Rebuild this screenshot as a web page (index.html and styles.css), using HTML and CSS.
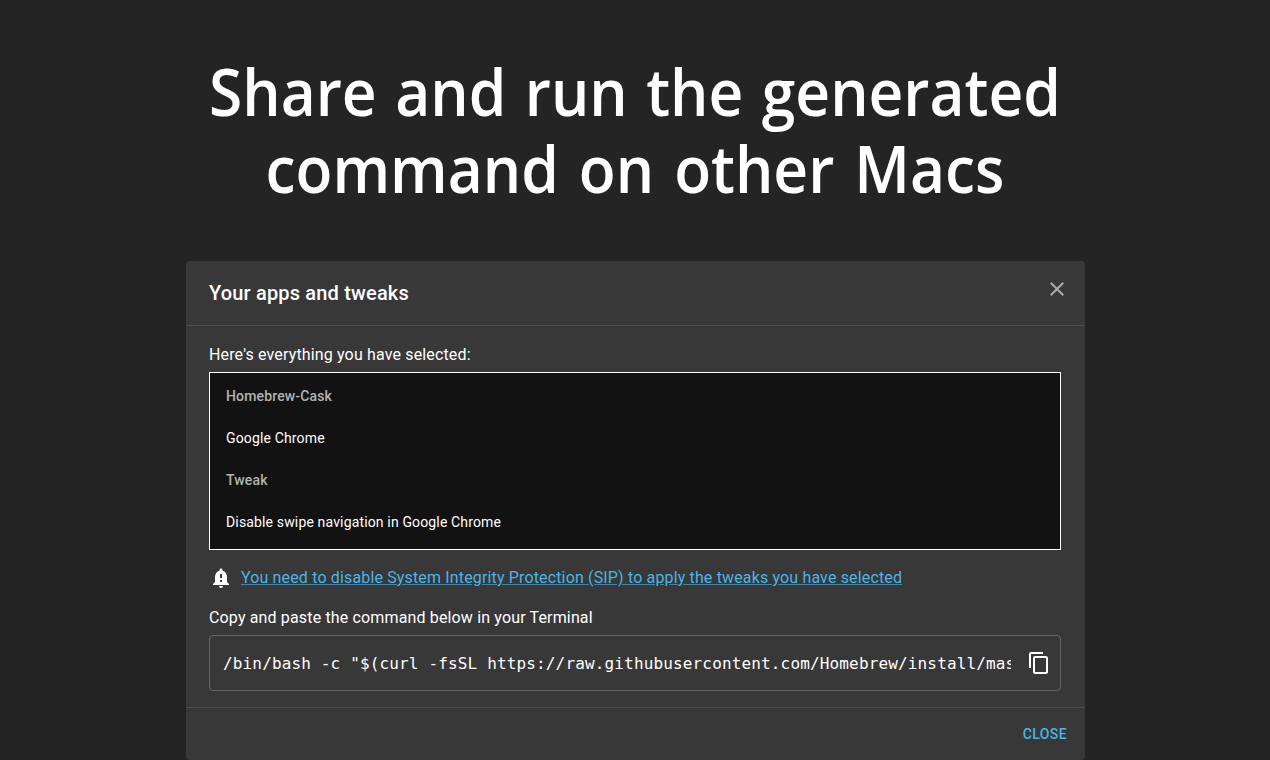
FILE: index.html
```html
<!DOCTYPE html>
<html lang="en">
<head>
    <meta charset="UTF-8">
    <title>Share and run the generated command</title>
    <link rel="stylesheet" href="styles.css">
</head>
<body>
<h1 class="headline">
    <span class="line first">Share and run the generated</span>
    <span class="line second">command on other Macs</span>
</h1>
<div class="dialog">
    <div class="dialog-title">
        <h2>Your apps and tweaks</h2>
        <button class="icon-btn dismiss" aria-label="close">
            <svg width="24" height="24" viewBox="0 0 24 24"><path d="M19 6.41L17.59 5 12 10.59 6.41 5 5 6.41 10.59 12 5 17.59 6.41 19 12 13.41 17.59 19 19 17.59 13.41 12z"/></svg>
        </button>
    </div>
    <div class="dialog-content">
        <p>Here's everything you have selected:</p>
        <ul class="selected">
            <li class="group">Homebrew-Cask</li>
            <li>Google Chrome</li>
            <li class="group">Tweak</li>
            <li>Disable swipe navigation in Google Chrome</li>
        </ul>
        <div class="notice">
            <svg width="24" height="24" viewBox="0 0 24 24"><path d="M18 16v-5c0-3.07-1.64-5.64-4.5-6.32V4c0-.83-.67-1.5-1.5-1.5s-1.5.67-1.5 1.5v.68C7.63 5.36 6 7.92 6 11v5l-2 2v1h16v-1l-2-2zm-5 0h-2v-2h2v2zm0-4h-2V8h2v4zm-1 10c1.1 0 2-.9 2-2h-4c0 1.1.89 2 2 2z"/></svg>
            <a href="#">You need to disable System Integrity Protection (SIP) to apply the tweaks you have selected</a>
        </div>
        <p>Copy and paste the command below in your Terminal</p>
        <div class="command">
            <code>/bin/bash -c "$(curl -fsSL https://raw.githubusercontent.com/Homebrew/install/mas</code>
            <button class="icon-btn" aria-label="copy">
                <svg width="24" height="24" viewBox="0 0 24 24"><path d="M16 1H4c-1.1 0-2 .9-2 2v14h2V3h12V1zm3 4H8c-1.1 0-2 .9-2 2v14c0 1.1.9 2 2 2h11c1.1 0 2-.9 2-2V7c0-1.1-.9-2-2-2zm0 16H8V7h11v14z"/></svg>
            </button>
        </div>
    </div>
    <div class="dialog-actions">
        <button class="close">CLOSE</button>
    </div>
</div>
</body>
</html>
```
FILE: styles.css
```css
* {
    padding: 0;
    margin: 0;
    list-style: none;
    box-sizing: border-box;
}

body {
    height: 760px;
    overflow: hidden;
    background: #242424;
    color: #fff;
    font-family: Roboto, "Liberation Sans", sans-serif;
    font-size: 16px;
    line-height: 24px;
    letter-spacing: 0.15px;
}

button {
    border: 0;
    background: none;
    color: inherit;
    font-family: inherit;
    cursor: pointer;
}

svg {
    display: block;
    fill: currentColor;
}

.headline {
    height: 261px;
    padding-top: 53px;
    font-family: "Open Sans", "Noto Sans", sans-serif;
    font-size: 65px;
    font-weight: 600;
    line-height: 77px;
    letter-spacing: 0;
    text-align: center;
    white-space: nowrap;
}

.line {
    display: block;
    transform: scaleX(0.93);
}

.first {
    word-spacing: 3px;
}

.second {
    word-spacing: 4.6px;
}

.dialog {
    width: 899px;
    height: 499px;
    margin-left: 186px;
    background: #383838;
    border-radius: 4px;
}

.dialog-title {
    display: flex;
    justify-content: space-between;
    height: 65px;
    padding: 16px 16px 0 23px;
    border-bottom: 1px solid #4d4d4d;
}

.dialog-title h2 {
    font-size: 20px;
    font-weight: 500;
    line-height: 32px;
    letter-spacing: 0.17px;
}

.dismiss {
    height: 24px;
    color: #aaa;
}

.dialog-content {
    height: 382px;
    padding: 17px 24px 0 23px;
    border-bottom: 1px solid #4d4d4d;
}

.selected {
    height: 178px;
    margin: 5px 0 16px;
    padding: 2px 16px;
    background: #121212;
    border: 1px solid #fff;
    font-size: 14px;
}

.selected li {
    line-height: 42px;
}

.selected .group {
    color: #b3b3b3;
    font-weight: 500;
}

.notice {
    display: flex;
    gap: 8px;
    margin-bottom: 16px;
}

.notice a {
    color: #4ab4e6;
    text-decoration-color: #4186a6;
}

.command {
    display: flex;
    align-items: center;
    justify-content: space-between;
    height: 56px;
    margin-top: 5px;
    padding: 0 9px 0 13px;
    border: 1px solid #666;
    border-radius: 4px;
}

.command code {
    width: 788px;
    padding-top: 2px;
    overflow: hidden;
    font-family: "DejaVu Sans Mono", monospace;
    font-size: 16px;
    white-space: nowrap;
}

.dialog-actions {
    display: flex;
    justify-content: flex-end;
    padding: 8px 18px 0;
}

.close {
    height: 36px;
    color: #4ab4e6;
    font-size: 14px;
    font-weight: 500;
    letter-spacing: 0.4px;
}
```
